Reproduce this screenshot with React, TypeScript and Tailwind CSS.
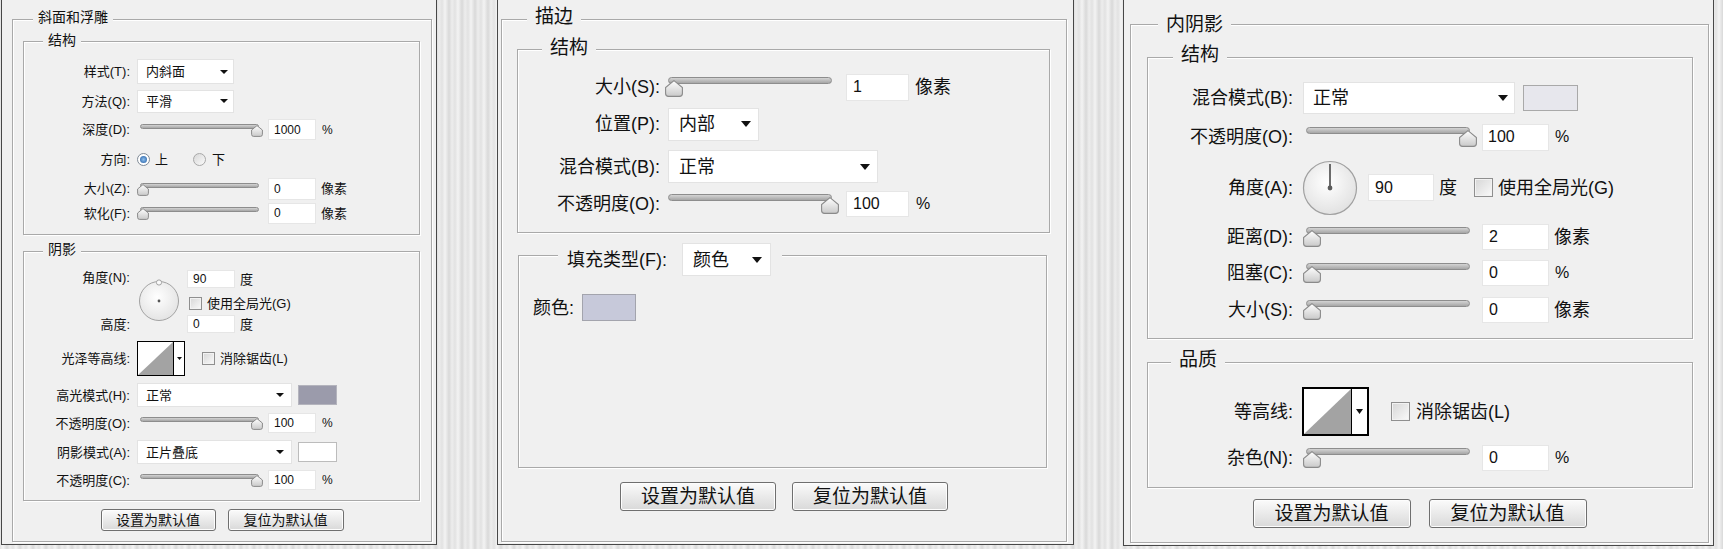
import React from 'react';

type Kids = { children?: React.ReactNode };

const Group = ({ className, legend, legendClass, children }: Kids & { className: string; legend: React.ReactNode; legendClass: string }) => (
  <div className={`relative border border-[#a9a9a9] shadow-[inset_1px_1px_0_#ffffff,1px_1px_0_#ffffff] ${className}`}>
    <div className={`absolute flex items-center bg-[#f0f0f0] ${legendClass}`}>{legend}</div>
    {children}
  </div>
);

const Tri = ({ w, h }: { w: number; h: number }) => (
  <svg width={w} height={h} viewBox={`0 0 ${w} ${h}`} className="shrink-0">
    <polygon points={`0,0 ${w},0 ${w / 2},${h}`} fill="#111" />
  </svg>
);

const Select = ({ value, className, aw, ah }: { value: string; className: string; aw: number; ah: number }) => (
  <div className={`flex shrink-0 items-center justify-between border border-[#e3e3e3] bg-white ${className}`}>
    <span>{value}</span>
    <Tri w={aw} h={ah} />
  </div>
);

const Input = ({ value, className }: { value: string; className: string }) => (
  <div className={`flex shrink-0 items-center border border-[#e6e6e6] bg-white ${className}`}>{value}</div>
);

const Swatch = ({ className }: { className: string }) => <div className={`shrink-0 border ${className}`} />;

const Check = ({ className }: { className: string }) => (
  <div className={`shrink-0 border border-[#8f8f8f] bg-linear-to-br from-[#d6d6d6] to-[#fafafa] shadow-[inset_0_0_0_1px_#f2f2f2] ${className}`} />
);

const Thumb = ({ big }: { big?: boolean }) =>
  big ? (
    <svg width="18" height="17" viewBox="0 0 18 17">
      <defs>
        <linearGradient id="tgb" x1="0" y1="0" x2="0" y2="1">
          <stop offset="0" stopColor="#ffffff" />
          <stop offset="1" stopColor="#c9c9c9" />
        </linearGradient>
      </defs>
      <path d="M9 0.6 L17.4 7.5 L17.4 13.5 Q17.4 16.4 14.5 16.4 L3.5 16.4 Q0.6 16.4 0.6 13.5 L0.6 7.5 Z" fill="url(#tgb)" stroke="#8a8a8a" strokeWidth="1.1" />
    </svg>
  ) : (
    <svg width="12" height="12" viewBox="0 0 12 12">
      <defs>
        <linearGradient id="tgs" x1="0" y1="0" x2="0" y2="1">
          <stop offset="0" stopColor="#ffffff" />
          <stop offset="1" stopColor="#c9c9c9" />
        </linearGradient>
      </defs>
      <path d="M6 0.6 L11.4 5 L11.4 9.4 Q11.4 11.4 9.4 11.4 L2.6 11.4 Q0.6 11.4 0.6 9.4 L0.6 5 Z" fill="url(#tgs)" stroke="#8a8a8a" strokeWidth="1" />
    </svg>
  );

const Slider = ({ big, right, className }: { big?: boolean; right?: boolean; className: string }) => (
  <div className={`relative shrink-0 ${className}`}>
    <div
      className={`absolute rounded-full border border-[#8d8d8d] bg-linear-to-b from-[#d4d4d4] to-[#a6a6a6] ${
        big ? 'left-[3px] right-[8px] top-[1px] h-[7px]' : 'left-[3px] right-[4px] top-[2px] h-[5px]'
      }`}
    />
    <div className={`absolute flex ${big ? 'top-[4px]' : 'top-[3px]'} ${right ? (big ? 'right-[1px]' : 'right-0') : 'left-0'}`}>
      <Thumb big={big} />
    </div>
  </div>
);

const Contour = ({ big }: { big?: boolean }) => (
  <div className={`flex shrink-0 border-black bg-white ${big ? 'h-[49px] w-[67px] border-2' : 'h-[35px] w-[48px] border'}`}>
    <svg className="h-full grow" viewBox="0 0 10 10" preserveAspectRatio="none">
      <polygon points="0,10 10,0 10,10" fill="#a3a3a3" />
    </svg>
    <div className={`flex h-full items-center justify-center border-l border-black ${big ? 'w-[16px]' : 'w-[11px]'}`}>
      {big ? <Tri w={7} h={5} /> : <Tri w={5} h={3} />}
    </div>
  </div>
);

const Button = ({ label, className }: { label: string; className: string }) => (
  <div className={`flex items-center justify-center rounded-[3px] border border-[#6f6f6f] bg-linear-to-b from-[#fbfbfb] to-[#d9d9d9] shadow-[inset_0_0_0_1px_#fdfdfd] ${className}`}>
    {label}
  </div>
);

function LeftPanel() {
  const lbl = 'w-[106px] shrink-0 text-right';
  const lg = 'top-[-11px] px-[5px] text-[14px] leading-[16px]';
  return (
    <div className="ml-[1px] h-[545px] w-[436px] shrink-0 border-x border-b border-[#474747] bg-[#f0f0f0] text-[13px] leading-none">
      <Group className="ml-[10px] mt-[19px] h-[523px] w-[420px]" legend="斜面和浮雕" legendClass={`left-[20px] ${lg}`}>
        <Group className="ml-[10px] mt-[21px] h-[194px] w-[397px] pt-[15px]" legend="结构" legendClass="left-[19px] top-[-10px] px-[5px] text-[14px] leading-[16px]">
          <div className="flex h-[29px] items-center">
            <div className={lbl}>样式(T):</div>
            <Select value="内斜面" className="ml-[7px] h-[25px] w-[97px] pl-[8px] pr-[5px]" aw={8} ah={4} />
          </div>
          <div className="flex h-[30px] items-center">
            <div className={lbl}>方法(Q):</div>
            <Select value="平滑" className="ml-[7px] h-[23px] w-[97px] pl-[8px] pr-[5px]" aw={8} ah={4} />
          </div>
          <div className="flex h-[27px] items-center">
            <div className={lbl}>深度(D):</div>
            <Slider right className="ml-[7px] h-[16px] w-[126px]" />
            <Input value="1000" className="ml-[5px] h-[21px] w-[48px] pl-[5px] text-[12px]" />
            <span className="ml-[6px] text-[12px]">%</span>
          </div>
          <div className="flex h-[33px] items-center">
            <div className={lbl}>方向:</div>
            <div className="ml-[7px] flex h-[13px] w-[13px] items-center justify-center rounded-full border border-[#7f8a96] bg-white">
              <div className="h-[7px] w-[7px] rounded-full bg-radial from-[#8fc0ee] to-[#1d5aa0]" />
            </div>
            <span className="ml-[5px]">上</span>
            <div className="ml-[25px] h-[13px] w-[13px] rounded-full border border-[#a8a8a8] bg-linear-to-br from-[#d8d8d8] to-[#fafafa]" />
            <span className="ml-[6px]">下</span>
          </div>
          <div className="flex h-[25px] items-center">
            <div className={lbl}>大小(Z):</div>
            <Slider className="ml-[7px] h-[16px] w-[126px]" />
            <Input value="0" className="ml-[5px] h-[22px] w-[48px] pl-[5px] text-[12px]" />
            <span className="ml-[5px]">像素</span>
          </div>
          <div className="flex h-[24px] items-center">
            <div className={lbl}>软化(F):</div>
            <Slider className="ml-[7px] h-[16px] w-[126px]" />
            <Input value="0" className="ml-[5px] h-[21px] w-[48px] pl-[5px] text-[12px]" />
            <span className="ml-[5px]">像素</span>
          </div>
        </Group>

        <Group className="ml-[10px] mt-[16px] h-[250px] w-[397px] pt-[16px]" legend="阴影" legendClass={`left-[19px] ${lg}`}>
          <div className="flex h-[67px]">
            <div className="flex w-[106px] shrink-0 flex-col justify-between text-right">
              <div className="h-[20px] leading-[20px]">角度(N):</div>
              <div className="h-[20px] leading-[20px]">高度:</div>
            </div>
            <svg className="ml-[8px] mt-[11px] shrink-0" width="42" height="42" viewBox="0 0 42 42">
              <defs>
                <radialGradient id="dls" cx="0.45" cy="0.4" r="0.6">
                  <stop offset="0" stopColor="#ffffff" />
                  <stop offset="1" stopColor="#e4e4e4" />
                </radialGradient>
              </defs>
              <circle cx="21" cy="22" r="19.5" fill="url(#dls)" stroke="#a2a2a2" strokeWidth="1" />
              <circle cx="21" cy="3.5" r="2.6" fill="#fafafa" stroke="#9a9a9a" strokeWidth="0.9" />
              <circle cx="21" cy="22" r="1.4" fill="#555" />
            </svg>
            <div className="ml-[7px] flex flex-col">
              <div className="mt-[2px] flex items-center">
                <Input value="90" className="h-[18px] w-[48px] pl-[5px] text-[12px]" />
                <span className="ml-[5px]">度</span>
              </div>
              <div className="mt-[8px] flex h-[14px] items-center">
                <Check className="ml-[2px] h-[13px] w-[13px]" />
                <span className="ml-[5px]">使用全局光(G)</span>
              </div>
              <div className="mt-[5px] flex items-center">
                <Input value="0" className="h-[18px] w-[48px] pl-[5px] text-[12px]" />
                <span className="ml-[5px]">度</span>
              </div>
            </div>
          </div>
          <div className="mt-[6px] flex h-[35px] items-center">
            <div className={lbl}>光泽等高线:</div>
            <div className="ml-[7px] flex">
              <Contour />
            </div>
            <Check className="ml-[17px] h-[13px] w-[13px]" />
            <span className="ml-[5px]">消除锯齿(L)</span>
          </div>
          <div className="mt-[7px] flex h-[24px] items-center">
            <div className={lbl}>高光模式(H):</div>
            <Select value="正常" className="ml-[7px] h-[24px] w-[155px] pl-[8px] pr-[7px]" aw={8} ah={4} />
            <Swatch className="ml-[6px] h-[20px] w-[39px] border-[#b4b4bd] bg-[#9b9bab]" />
          </div>
          <div className="mt-[4px] flex h-[24px] items-center">
            <div className={lbl}>不透明度(O):</div>
            <Slider right className="ml-[7px] h-[16px] w-[126px]" />
            <Input value="100" className="ml-[5px] h-[20px] w-[48px] pl-[5px] text-[12px]" />
            <span className="ml-[6px] text-[12px]">%</span>
          </div>
          <div className="mt-[5px] flex h-[24px] items-center">
            <div className={lbl}>阴影模式(A):</div>
            <Select value="正片叠底" className="ml-[7px] h-[24px] w-[155px] pl-[8px] pr-[7px]" aw={8} ah={4} />
            <Swatch className="ml-[6px] h-[20px] w-[39px] border-[#bcbcbc] bg-white" />
          </div>
          <div className="mt-[4px] flex h-[24px] items-center">
            <div className={lbl}>不透明度(C):</div>
            <Slider right className="ml-[7px] h-[16px] w-[126px]" />
            <Input value="100" className="ml-[5px] h-[20px] w-[48px] pl-[5px] text-[12px]" />
            <span className="ml-[6px] text-[12px]">%</span>
          </div>
        </Group>

        <div className="mt-[8px] flex justify-center gap-[12px] text-[14px]">
          <Button label="设置为默认值" className="h-[22px] w-[115px]" />
          <Button label="复位为默认值" className="h-[22px] w-[116px]" />
        </div>
      </Group>
    </div>
  );
}

function MiddlePanel() {
  const lbl = 'w-[142px] shrink-0 text-right';
  const lg = 'px-[8px] text-[19px] leading-[22px]';
  return (
    <div className="ml-[60px] h-[545px] w-[577px] shrink-0 border-x border-b border-[#474747] bg-[#f0f0f0] text-[18px] leading-none">
      <Group className="ml-[3px] mt-[19px] h-[523px] w-[566px]" legend="描边" legendClass={`left-[25px] top-[-14px] ${lg}`}>
        <Group className="ml-[15px] mt-[29px] h-[184px] w-[533px] pt-[20px]" legend="结构" legendClass={`left-[24px] top-[-13px] ${lg}`}>
          <div className="flex h-[34px] items-center">
            <div className={lbl}>大小(S):</div>
            <Slider big className="ml-[5px] h-[22px] w-[175px]" />
            <Input value="1" className="ml-[6px] h-[27px] w-[63px] pl-[6px] text-[16px]" />
            <span className="ml-[6px]">像素</span>
          </div>
          <div className="flex h-[40px] items-center">
            <div className={lbl}>位置(P):</div>
            <Select value="内部" className="ml-[8px] h-[33px] w-[91px] pl-[10px] pr-[7px]" aw={10} ah={6} />
          </div>
          <div className="flex h-[45px] items-center">
            <div className={lbl}>混合模式(B):</div>
            <Select value="正常" className="ml-[8px] h-[33px] w-[210px] pl-[10px] pr-[7px]" aw={10} ah={6} />
          </div>
          <div className="flex h-[30px] items-center">
            <div className={lbl}>不透明度(O):</div>
            <Slider big right className="ml-[5px] h-[22px] w-[175px]" />
            <Input value="100" className="ml-[6px] h-[26px] w-[63px] pl-[6px] text-[16px]" />
            <span className="ml-[7px] text-[16px]">%</span>
          </div>
        </Group>

        <Group
          className="ml-[16px] mt-[22px] h-[213px] w-[529px] pt-[38px]"
          legend={
            <>
              <span>填充类型(F):</span>
              <Select value="颜色" className="ml-[15px] h-[33px] w-[89px] pl-[10px] pr-[8px]" aw={10} ah={6} />
            </>
          }
          legendClass="left-[39px] top-[-13px] h-[33px] pl-[9px] pr-[11px]"
        >
          <div className="flex h-[27px] items-center">
            <span className="ml-[14px]">颜色:</span>
            <Swatch className="ml-[8px] h-[27px] w-[54px] border-[#a3a4ad] bg-[#c7c9da]" />
          </div>
        </Group>

        <div className="mt-[14px] flex justify-center gap-[16px] text-[19px]">
          <Button label="设置为默认值" className="h-[29px] w-[156px]" />
          <Button label="复位为默认值" className="h-[29px] w-[156px]" />
        </div>
      </Group>
    </div>
  );
}

function RightPanel() {
  const lbl = 'w-[145px] shrink-0 text-right';
  const lg = 'px-[8px] text-[19px] leading-[22px]';
  return (
    <div className="ml-[49px] h-[546px] w-[591px] shrink-0 border-x border-b border-[#474747] bg-[#f0f0f0] text-[18px] leading-none">
      <Group className="ml-[6px] mt-[24px] h-[519px] w-[579px]" legend="内阴影" legendClass={`left-[27px] top-[-11px] ${lg}`}>
        <Group className="ml-[16px] mt-[32px] h-[282px] w-[546px] pt-[20px]" legend="结构" legendClass={`left-[25px] top-[-14px] ${lg}`}>
          <div className="flex h-[39px] items-center">
            <div className={lbl}>混合模式(B):</div>
            <Select value="正常" className="ml-[10px] h-[32px] w-[212px] pl-[9px] pr-[6px]" aw={10} ah={6} />
            <Swatch className="ml-[8px] h-[26px] w-[55px] border-[#a9a9a9] bg-[#e7e7ed]" />
          </div>
          <div className="flex h-[40px] items-center">
            <div className={lbl}>不透明度(O):</div>
            <Slider big right className="ml-[10px] h-[22px] w-[175px]" />
            <Input value="100" className="ml-[4px] h-[27px] w-[67px] pl-[5px] text-[16px]" />
            <span className="ml-[6px] text-[16px]">%</span>
          </div>
          <div className="flex h-[61px] items-center">
            <div className={lbl}>角度(A):</div>
            <svg className="ml-[9px] shrink-0" width="56" height="56" viewBox="0 0 56 56">
              <defs>
                <radialGradient id="dlb" cx="0.45" cy="0.4" r="0.6">
                  <stop offset="0" stopColor="#ffffff" />
                  <stop offset="1" stopColor="#e2e2e2" />
                </radialGradient>
              </defs>
              <circle cx="28" cy="28" r="26.5" fill="url(#dlb)" stroke="#a0a0a0" strokeWidth="1.2" />
              <line x1="28" y1="28" x2="28" y2="4" stroke="#5c5c5c" strokeWidth="1.8" />
              <circle cx="28" cy="28" r="2.4" fill="#5c5c5c" />
            </svg>
            <Input value="90" className="ml-[10px] h-[27px] w-[66px] pl-[6px] text-[16px]" />
            <span className="ml-[5px]">度</span>
            <Check className="ml-[17px] h-[19px] w-[19px]" />
            <span className="ml-[5px]">使用全局光(G)</span>
          </div>
          <div className="flex h-[37px] items-center">
            <div className={lbl}>距离(D):</div>
            <Slider big className="ml-[10px] h-[22px] w-[175px]" />
            <Input value="2" className="ml-[4px] h-[26px] w-[67px] pl-[6px] text-[16px]" />
            <span className="ml-[5px]">像素</span>
          </div>
          <div className="flex h-[35px] items-center">
            <div className={lbl}>阻塞(C):</div>
            <Slider big className="ml-[10px] h-[22px] w-[175px]" />
            <Input value="0" className="ml-[4px] h-[26px] w-[67px] pl-[6px] text-[16px]" />
            <span className="ml-[6px] text-[16px]">%</span>
          </div>
          <div className="flex h-[40px] items-center">
            <div className={lbl}>大小(S):</div>
            <Slider big className="ml-[10px] h-[22px] w-[175px]" />
            <Input value="0" className="ml-[4px] h-[26px] w-[67px] pl-[6px] text-[16px]" />
            <span className="ml-[5px]">像素</span>
          </div>
        </Group>

        <Group className="ml-[16px] mt-[23px] h-[126px] w-[546px] pt-[24px]" legend="品质" legendClass={`left-[23px] top-[-14px] ${lg}`}>
          <div className="flex h-[49px] items-center">
            <div className={lbl}>等高线:</div>
            <div className="ml-[9px] flex">
              <Contour big />
            </div>
            <Check className="ml-[22px] h-[19px] w-[19px]" />
            <span className="ml-[6px]">消除锯齿(L)</span>
          </div>
          <div className="mt-[4px] flex h-[36px] items-center">
            <div className={lbl}>杂色(N):</div>
            <Slider big className="ml-[10px] h-[22px] w-[175px]" />
            <Input value="0" className="ml-[4px] h-[26px] w-[67px] pl-[6px] text-[16px]" />
            <span className="ml-[6px] text-[16px]">%</span>
          </div>
        </Group>

        <div className="mt-[11px] flex justify-center gap-[18px] text-[19px]">
          <Button label="设置为默认值" className="h-[29px] w-[158px]" />
          <Button label="复位为默认值" className="h-[29px] w-[158px]" />
        </div>
      </Group>
    </div>
  );
}

export default function App() {
  return (
    <div className="flex h-[549px] w-[1723px] items-start overflow-hidden bg-[repeating-linear-gradient(90deg,#e2e2e2_0px,#f3f3f3_3px,#d9d9d9_7px,#ededed_10px,#e2e2e2_13px)] font-['Liberation_Sans','Noto_Sans_CJK_SC',sans-serif] text-[#111]">
      <LeftPanel />
      <MiddlePanel />
      <RightPanel />
    </div>
  );
}
